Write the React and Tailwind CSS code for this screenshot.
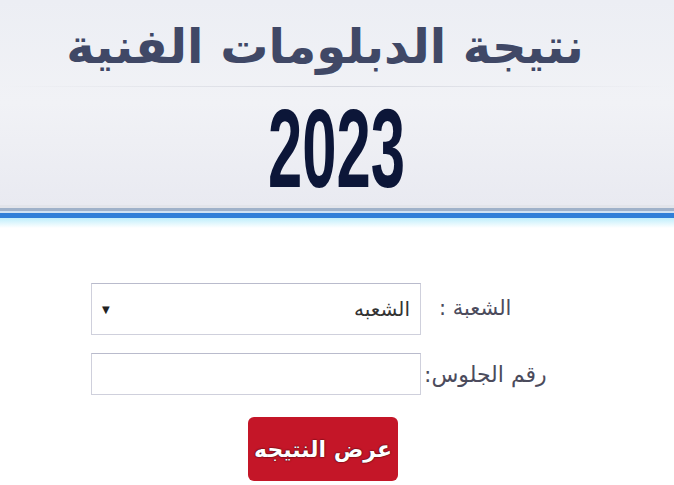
export default function App() {
    const arabic = { fontFamily: '"DejaVu Sans", "Noto Sans", sans-serif' };

    return (
        <div className="w-[674px] h-[485px] overflow-hidden bg-white relative">
            {/* Header */}
            <div className="h-[205px] bg-gradient-to-b from-[#eceef4] via-[#f1f2f6] to-[#e9eaf1] flex flex-col items-center">
                <h1
                    dir="rtl"
                    className="mt-[14px] mr-[24px] text-[48px] leading-[64px] font-bold text-[#404866] tracking-tight"
                    style={arabic}
                >
                    نتيجة الدبلومات الفنية
                </h1>
                <div className="w-full h-px bg-gradient-to-r from-transparent via-[#d6d8e0] to-transparent mt-[8px]" />
                <div
                    className="mt-[12px] text-[112px] leading-[100px] font-bold text-[#0c1638] scale-x-[0.55] origin-center"
                    style={{ fontFamily: '"Liberation Sans", Arial, sans-serif' }}
                >
                    2023
                </div>
            </div>

            {/* Stripes */}
            <div className="h-[3px] bg-[#e2e4ea]" />
            <div className="h-[3px] bg-[#9fb1c9]" />
            <div className="h-[2px] bg-[#cfe2f3]" />
            <div className="h-[5px] bg-[#2f7fd8]" />
            <div className="h-[10px] bg-gradient-to-b from-[#bfeefb] to-white" />

            {/* Form */}
            <div className="pl-[91px] pt-[55px] flex flex-col gap-[18px]" style={arabic}>
                <div className="flex items-center">
                    <div
                        dir="rtl"
                        className="w-[330px] h-[52px] border border-[#cfd0dc] border-t-[#b9bbcc] bg-white flex items-center justify-between px-[10px] text-[20px] text-[#333]"
                    >
                        <span>الشعبه</span>
                        <span className="text-[10px] text-[#222]">▼</span>
                    </div>
                    <span dir="rtl" className="ml-[18px] text-[21px] text-[#4b4b5c] whitespace-nowrap">
                        الشعبة&nbsp;:
                    </span>
                </div>
                <div className="flex items-center">
                    <div className="w-[330px] h-[42px] border border-[#cfd0dc] border-t-[#b9bbcc] bg-white" />
                    <span dir="rtl" className="ml-[3px] text-[22px] text-[#4b4b5c] whitespace-nowrap">
                        رقم الجلوس:
                    </span>
                </div>
            </div>

            <div className="flex pl-[248px] pt-[22px]">
                <button
                    dir="rtl"
                    className="w-[150px] h-[64px] rounded-[6px] bg-[#c41628] text-white text-[22px] font-bold flex items-center justify-center"
                    style={{ ...arabic, textShadow: '0 0 2px #3a0a10, 0 0 1px #3a0a10' }}
                >
                    عرض النتيجه
                </button>
            </div>
        </div>
    );
}
